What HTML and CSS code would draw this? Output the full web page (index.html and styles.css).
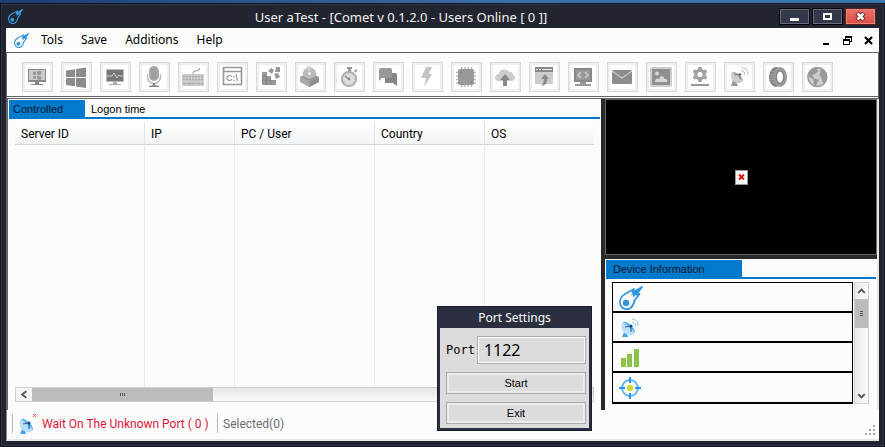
FILE: index.html
```html
<!DOCTYPE html>
<html lang="en">
<head>
<meta charset="utf-8">
<title>Comet v 0.1.2.0</title>
<link rel="stylesheet" href="styles.css">
</head>
<body>
<svg class="defs" aria-hidden="true">
  <symbol id="comet" viewBox="0 0 24 24">
    <path d="M2 20C-.5 15 2 10.500 6 8L15 3l-1.500 3.500L23 1l-5.500 7.500 3-.5-5 6.500c-.5 3-1.500 5.500-4 7.500-3 2-7.500 1.500-9.500-2z" fill="none" stroke="currentColor" stroke-width="1.800" stroke-linejoin="round"/>
    <path d="M23.500.500 14 6.500 11.500 9.500 14 8.500l0 3 3.500-3z" fill="currentColor"/>
    <circle cx="7" cy="17" r="3.200" fill="currentColor"/>
  </symbol>
  <symbol id="dish" viewBox="0 0 15 17">
    <path d="M3 12 1 17h6l-1-4z" fill="#42a5f5"/>
    <path d="M2 2C-1 7 1 13 7 15c3 .5 5 0 7-2z" fill="#bbdefb"/>
    <path d="M2 2l12 11c1-5-8-13-12-11z" fill="#64b5f6"/>
    <path d="M4 7l6-1v6" fill="none" stroke="#37658f" stroke-width="1.200"/>
    <circle cx="10" cy="6" r="1.500" fill="#0d47a1"/>
  </symbol>
</svg>
<main class="window">
  <header class="titlebar">
    <svg class="comet-small"><use href="#comet"/></svg>
    <h1>User aTest - [Comet v 0.1.2.0 - Users Online [ 0 ]]</h1>
    <div class="captions">
      <button class="cap" aria-label="Minimize"><svg viewBox="0 0 27 13"><path d="M9 8h9v3H9z" fill="#fff"/></svg></button>
      <button class="cap" aria-label="Maximize"><svg viewBox="0 0 27 13"><path d="M10 4h7v5h-7z" fill="none" stroke="#fff" stroke-width="2"/></svg></button>
      <button class="cap close" aria-label="Close"><svg viewBox="0 0 27 13"><path d="M10 3l7 7M17 3l-7 7" stroke="#7a2019" stroke-width="4.500"/><path d="M10.500 3.500l6 6M16.500 3.500l-6 6" stroke="#fff" stroke-width="2.500"/></svg></button>
    </div>
  </header>
  <div class="client">
    <nav class="menu">
      <svg class="comet-small"><use href="#comet"/></svg>
      <button>Tols</button><button>Save</button><button>Additions</button><button>Help</button>
      <div class="mdi">
        <button aria-label="Minimize child"><svg viewBox="0 0 9 9"><path d="M1 7h6v2H1z"/></svg></button>
        <button aria-label="Restore child"><svg viewBox="0 0 9 9"><path d="M2 0h7v6H7V5h1V2H3v1H2zM0 3h7v6H0zm1 2v3h5V5z" fill-rule="evenodd"/></svg></button>
        <button aria-label="Close child"><svg viewBox="0 0 9 9"><path d="M1 1l7 7M8 1L1 8" stroke="#000" stroke-width="2.200"/></svg></button>
      </div>
    </nav>
    <div class="toolbar">
      <button aria-label="Remote desktop"><svg viewBox="0 0 31 30"><path d="M6 7h18v13H6z" fill="#888"/><path d="M7 8h16v10H7z" fill="#ccc"/><path d="M11 10l3-.5V13h-3zm4-.6l4-.6V13h-4zM11 14h3v3l-3-.5zm4 0h4v4l-4-.7z" fill="#999"/><path d="M13 20h4v2h4v1H9v-1h4z" fill="#888"/></svg></button>
      <button aria-label="Windows"><svg viewBox="0 0 31 30"><path d="M5 8.500l9-1.300V15H5zm10-1.500l10-1.500V15H15zM5 16h9v8.300l-9-1.300zm10 0h10v10l-10-1.400z" fill="#8c8c8c"/></svg></button>
      <button aria-label="Monitoring"><svg viewBox="0 0 31 30"><path d="M6 7h18v13H6z" fill="#bbb"/><path d="M7 8h16v11H7z" fill="#777"/><path d="M7 14h5l2-3 3 5 2-3 1 1h3" fill="none" stroke="#ccc"/><path d="M13 20h4v2h4v1H9v-1h4z" fill="#aaa"/></svg></button>
      <button aria-label="Microphone"><svg viewBox="0 0 31 30"><path d="M8.500 12v3a6.500 6.500 0 0013 0v-3" fill="none" stroke="#bbb" stroke-width="1.500"/><rect x="10" y="4" width="10" height="15" rx="5" fill="#aaa"/><path d="M13 6v11M15 5v13M17 6v11" stroke="#8e8e8e" stroke-width=".7"/><path d="M14 21h2v2l4 1v1H10v-1l4-1z" fill="#888"/></svg></button>
      <button aria-label="Keyboard"><svg viewBox="0 0 31 30"><path d="M4 12h22v12H4z" fill="#ccc"/><path d="M5 14.500h20M5 17.500h20" stroke="#aaa" stroke-width="1.500" stroke-dasharray="2 1"/><path d="M5 21.500h20" stroke="#aaa" stroke-width="1.500" stroke-dasharray="3 1 9 1 3 1"/><path d="M15 12c0-4 2-3 4-3 2-.5 2-2 3-3" fill="none" stroke="#aaa" stroke-width="1.200"/></svg></button>
      <button aria-label="Command line"><svg viewBox="0 0 31 30"><path d="M6.500 5.500h18v17h-18zM7 9.500h18" fill="none" stroke="#999" stroke-width="1.700"/><text x="9" y="19">C:\</text></svg></button>
      <button aria-label="Registry"><svg viewBox="0 0 31 30"><path d="M6 10h5v4h4v4h5v5H6z" fill="#999"/><path d="M6 14h5M6 18h9M10.500 14v9M15 18v5" stroke="#7d7d7d"/><path d="M12 9l3-3 3 2-2 4zM20 5h4v5h-5zM18 12l4-1 2 4-4 2z" fill="#999"/></svg></button>
      <button aria-label="Programs"><svg viewBox="0 0 31 30"><path d="M5 15l9-4 10 4v5l-10 5-9-5z" fill="#aaa"/><path d="M14.500 19l9.500-4v5l-9.500 5z" fill="#909090"/><path d="M5 15l9.500-4 9.500 4-9.500 4z" fill="#989898"/><path d="M8 14a6.800 6.800 0 1113 0l-6.500 3z" fill="#bbb"/><path d="M14 10L11 5a7 7 0 015-1z" fill="#d4d4d4"/><circle cx="14.500" cy="11.500" r="1.300" fill="#fff"/></svg></button>
      <button aria-label="Timer"><svg viewBox="0 0 31 30"><path d="M13 5h5v2h-1v3h-3V7h-1zM20 9l2-2 1.500 1.500-2 2z" fill="#999"/><circle cx="15" cy="17" r="7.200" fill="#ddd" stroke="#aaa" stroke-width="1.700"/><path d="M11 14l4 3" stroke="#888" stroke-width="1.500"/><circle cx="15" cy="17" r="1.300" fill="#888"/><circle cx="15" cy="17" r="5.500" fill="none" stroke="#aaa" stroke-width=".8" stroke-dasharray="1 2"/></svg></button>
      <button aria-label="Chat"><svg viewBox="0 0 31 30"><path d="M12 11h10q2 0 2 2v11l-4-3h-8z" fill="#858585"/><path d="M8 6h9q2 0 2 2v6q0 2-2 2H9l-3 3V8q0-2 2-2z" fill="#999"/></svg></button>
      <button aria-label="Power"><svg viewBox="0 0 31 30"><path d="M14 5h6l-3 7h3l-8 13 2-9H9z" fill="#c4c4c4"/></svg></button>
      <button aria-label="Processor"><svg viewBox="0 0 31 30"><path d="M10.500 5v20M14 5v20M17 5v20M20.500 5v20M5 10.500h20M5 14h20M5 17.500h20M5 21h20" stroke="#bbb" stroke-width="1.500"/><rect x="7" y="7" width="16" height="16" rx="2" fill="#999"/><circle cx="10" cy="10" r="1" fill="#858585"/><circle cx="20" cy="20" r="1" fill="#858585"/></svg></button>
      <button aria-label="Upload"><svg viewBox="0 0 31 30"><path d="M8 19c-5-1-3-7 1-7 0-5 8-6 10-2 3-1 4 1 4 3 4 1 2 6-1 6z" fill="#ccc"/><path d="M15 12l5 6h-3v6h-4v-6h-3z" fill="#888"/></svg></button>
      <button aria-label="Open page"><svg viewBox="0 0 31 30"><path d="M6 5h18v17H6z" fill="#ccc"/><path d="M6 5h18v5H6z" fill="#888"/><path d="M7 7h2v1H7zm3 0h2v1h-2zm3 0h10v1H13z" fill="#eee"/><path d="M16 12l4 5h-2c0 4-1 6-6 7 2-2 3-4 3-7h-3z" fill="#888"/></svg></button>
      <button aria-label="Script"><svg viewBox="0 0 31 30"><path d="M6 6h18v14H6z" fill="#888"/><path d="M8 8h14v10H8z" fill="#999"/><path d="M13 10l-3 3 3 3M17 10l3 3-3 3" fill="none" stroke="#ccc" stroke-width="1.500"/><path d="M12 20h6v2h5v2H7v-2h5z" fill="#999"/></svg></button>
      <button aria-label="Mail"><svg viewBox="0 0 31 30"><rect x="5" y="8" width="20" height="14" rx="1.500" fill="#8c8c8c"/><path d="M5 9l10 7 10-7" fill="none" stroke="#ccc" stroke-width="1.200"/></svg></button>
      <button aria-label="Picture"><svg viewBox="0 0 31 30"><rect x="4" y="5" width="22" height="20" rx="2" fill="#ccc"/><path d="M6 7h18v16H6z" fill="#909090"/><path d="M9 20c0-4 3-4 4-3 2-4 5-4 5 0 3-1 4 3 3 3z" fill="#d8d8d8"/><circle cx="11" cy="11.500" r="2" fill="#d8d8d8"/></svg></button>
      <button aria-label="Settings"><svg viewBox="0 0 31 30"><circle cx="15" cy="12.500" r="4.200" fill="none" stroke="#a0a0a0" stroke-width="3.200"/><path d="M15 5v3M15 17v3M8.500 8.700l2.600 1.500M18.900 14.800l2.600 1.500M8.500 16.300l2.600-1.500M18.900 10.200l2.600-1.500" stroke="#a0a0a0" stroke-width="3.500"/><path d="M6 22h18v2H6z" fill="#999"/></svg></button>
      <button aria-label="Connection"><svg viewBox="0 0 31 30"><path d="M9 18l-2 6h7l-2-4z" fill="#999"/><path d="M8 10c-3 4 0 10 5 11 2 0 4 0 6-2z" fill="#ccc"/><path d="M8 10l11 9c1-3-8-11-11-9z" fill="#aaa"/><path d="M10 13l6-1v5" fill="none" stroke="#777"/><circle cx="16" cy="12.500" r="1.200" fill="#666"/><path d="M17 8q4 1 4 5M17 5.500q7 0 7 7" fill="none" stroke="#bbb"/></svg></button>
      <button aria-label="Tyre"><svg viewBox="0 0 31 30"><ellipse cx="13" cy="15" rx="7" ry="10" fill="#858585"/><ellipse cx="17" cy="15" rx="7" ry="10" fill="#999"/><ellipse cx="17" cy="15" rx="4.500" ry="7" fill="#858585"/><ellipse cx="17" cy="15" rx="3" ry="5.500" fill="#fff"/><path d="M8 9l3 1M7 12l3 1M6 15h4M7 18l3-1M8 21l3-1" stroke="#aaa" stroke-width=".8"/></svg></button>
      <button aria-label="World"><svg viewBox="0 0 31 30"><circle cx="15.300" cy="15" r="9.500" fill="#ccc" stroke="#999" stroke-width="1.500"/><path d="M7 10c2-3 5-5 9-5l-1 3 2 1-4 3-3 1 2 3-1 1-4-2zM11 16l6 2-2 3-1 4-2-1zM18 8l3-1 3 5 .5 4-2 5-2-1-1-4-2-3 1-3z" fill="#999"/></svg></button>
    </div>
    <div class="workspace">
      <section class="users">
        <div class="tabs"><button class="tab active">Controlled</button><button class="tab">Logon time</button></div>
        <div class="grid">
          <table>
            <colgroup><col class="c130"><col class="c90"><col class="c140"><col class="c110"><col></colgroup>
            <thead><tr><th>Server ID</th><th>IP</th><th>PC / User</th><th>Country</th><th>OS</th></tr></thead>
            <tbody><tr><td></td><td></td><td></td><td></td><td></td></tr></tbody>
          </table>
          <div class="hscroll">
            <button aria-label="Scroll left"><svg viewBox="0 0 17 13"><path d="M11 3L6.500 6.500 11 10" fill="none" stroke="#555" stroke-width="2"/></svg></button>
            <div class="hthumb"><i></i><i></i><i></i></div>
          </div>
        </div>
      </section>
      <aside class="side">
        <div class="preview"><div class="missing"><svg viewBox="0 0 7 6"><path d="M1 .5l5 5M6 .5l-5 5" stroke="#e00" stroke-width="1.800"/></svg></div></div>
        <section class="device">
          <div class="tabs"><button class="tab active info">Device Information</button></div>
          <div class="devbody">
            <ul class="devlist">
              <li><svg class="blue" viewBox="0 0 24 24"><use href="#comet"/></svg></li>
              <li><svg viewBox="0 0 24 24"><use href="#dish" x="2" y="4" width="15" height="17"/><path d="M13 6q4 1 4 5M13 3q6 0 6 7" fill="none" stroke="#90caf9"/></svg></li>
              <li><svg viewBox="0 0 24 24"><path d="M2 12h5v9H2zm6-4h5v13H8zm7-5h5v18h-5z" fill="#8bc34a"/></svg></li>
              <li><svg viewBox="0 0 24 24"><circle cx="11" cy="12" r="8" fill="none" stroke="#64b5f6" stroke-width="2"/><path d="M11 1v6M11 17v6M0 12h6M16 12h6" stroke="#2196f3" stroke-width="2"/><circle cx="11" cy="12" r="3.200" fill="#cddc39"/></svg></li>
            </ul>
            <div class="vscroll">
              <button aria-label="Scroll up"><svg viewBox="0 0 13 17"><path d="M3 10.500L6.500 7l3.500 3.500" fill="none" stroke="#555" stroke-width="2"/></svg></button>
              <div class="vthumb"><i></i><i></i><i></i></div>
              <button class="down" aria-label="Scroll down"><svg viewBox="0 0 13 17"><path d="M3 7.500L6.500 11 10 7.500" fill="none" stroke="#555" stroke-width="2"/></svg></button>
            </div>
          </div>
        </section>
      </aside>
    </div>
    <footer class="status">
      <div class="wait"><svg viewBox="0 0 22 22"><use href="#dish" x="1" y="4" width="15" height="17"/><path d="M15 1l3 3M18 1l-3 3" stroke="#f4511e"/></svg><span>Wait On The Unknown Port ( 0 )</span></div>
      <div class="selected">Selected(0)</div>
      <svg class="grip" viewBox="0 0 10 10"><path d="M8 0h2v2H8zM4 4h2v2H4zm4 0h2v2H8zM0 8h2v2H0zm4 0h2v2H4zm4 0h2v2H8z" fill="#aaa"/></svg>
    </footer>
  </div>
  <form class="dialog">
    <h2>Port Settings</h2>
    <div class="dialog-body">
      <div class="field"><label for="port">Port</label><input id="port" type="text" value="1122"></div>
      <button type="button">Start</button>
      <button type="button">Exit</button>
    </div>
  </form>
</main>
</body>
</html>
```
FILE: styles.css
```css
* { box-sizing: border-box; }
body {
  margin: 0;
  min-height: 100vh;
  display: flex;
  padding-top: 3px;
  background: linear-gradient(90deg, #1b3d70, #3a6fa3 55%, #3a78b0);
  font: 12px/16px "Noto Sans", "Open Sans", sans-serif;
  color: #000;
}
button { padding: 0; border: 0; background: none; font: inherit; color: inherit; }
svg { display: block; flex-shrink: 0; }
.defs { position: absolute; width: 0; height: 0; }

.window {
  position: relative;
  flex: 1;
  display: flex;
  flex-direction: column;
  padding: 0 5px 5px;
  background: #22242f;
  border: 1px solid #11131d;
  box-shadow: inset 0 0 0 1px #30364a;
}
.titlebar { display: flex; align-items: center; height: 24px; }
.comet-small { width: 15px; height: 15px; color: #3498db; }
.titlebar .comet-small { margin-left: 2px; }
h1 { flex: 1; margin: 0; padding-top: 2px; font-size: 13px; line-height: 18px; font-weight: 400; color: #f4f4f4; text-align: center; }
.captions { display: flex; gap: 2px; padding-right: 3px; }
.cap { width: 31px; height: 17px; padding: 1px; border: 1px solid #050508; background: #33384a; box-shadow: inset 0 0 0 1px #666b7b; }
.cap svg { width: 27px; height: 13px; }
.close { background: linear-gradient(#e9756b, #dc4b40); border-color: #5c1f1e; box-shadow: inset 0 0 0 1px #ec8279; }

.client { flex: 1; display: flex; flex-direction: column; min-width: 0; background: #fcfcfc; }
.menu { display: flex; align-items: center; height: 24px; padding: 0 6px 0 8px; gap: 18px; }
.menu .comet-small { margin-right: -6px; }
.mdi { display: flex; gap: 12px; margin-left: auto; }
.mdi svg { width: 9px; height: 9px; }

.toolbar { display: flex; gap: 8px; height: 47px; padding: 9px 16px 0 15px; border: 1px solid #666; border-bottom: 3px double #666; }
.toolbar button { width: 31px; height: 30px; background: #fff; box-shadow: inset 0 0 0 1px #d9d9d9, inset 0 0 0 3px #efefef; }
.toolbar svg { width: 31px; height: 30px; }
.toolbar text { font: bold 9px "Liberation Sans", sans-serif; fill: #999; }

.workspace { flex: 1; display: flex; border-left: 2px solid #666; border-right: 2px solid #e6e6e6; background: #28282a; }
.users { flex: 1; display: flex; flex-direction: column; min-width: 0; padding: 1px 1px 0; margin-right: 4px; background: #fcfcfc; }
.tabs { display: flex; height: 19px; border-bottom: 2px solid #007acc; }
.tab { font: 11px/19px "Liberation Sans", sans-serif; padding: 0 6px; text-align: left; }
.active { width: 76px; padding: 0 4px; background: #007acc; color: #06172c; }
.info { width: 136px; padding: 0 7px; }
.grid { flex: 1; display: flex; flex-direction: column; padding: 3px 6px 8px; }
table { width: 100%; flex: 1; height: 264px; border-collapse: separate; border-spacing: 0; table-layout: fixed; }
.c130 { width: 130px; }
.c90 { width: 90px; }
.c140 { width: 140px; }
.c110 { width: 110px; }
th { height: 23px; padding: 2px 6px 0; font: 12px/16px Roboto, sans-serif; text-align: left; background: linear-gradient(#fff, #f2f4f6); border-bottom: 1px solid #d5d5d5; border-right: 1px solid #e2e4e7; }
td { padding: 0; border-right: 1px solid #e3eefa; }
th:last-child, td:last-child { border-right: 0; }
.hscroll { display: flex; height: 15px; border: 1px solid #d0d0d0; background: linear-gradient(#e6e6e6, #fafafa); }
.hscroll button { width: 16px; background: #f5f5f5; }
.hscroll svg { width: 16px; height: 13px; }
.hthumb { display: flex; justify-content: center; align-items: center; gap: 1px; width: 181px; background: #bcbcbc; }
.hthumb i { width: 1px; height: 3px; background: #555; }

.side { width: 272px; display: flex; flex-direction: column; }
.preview { display: grid; place-items: center; height: 156px; background: #000; border: 1px solid #666; }
.missing { display: grid; place-items: center; width: 13px; height: 15px; background: #fff; border: 1px solid #999; }
.missing svg { width: 7px; height: 6px; }
.device { flex: 1; margin-top: 4px; padding: 1px 1px 0; background: #fcfcfc; }
.devbody { display: flex; gap: 1px; padding: 3px 7px 0 6px; }
.devlist { flex: 1; margin: 0; padding: 0; list-style: none; border: 1px solid #000; }
.devlist li { height: 30px; padding: 3px 6px; border-bottom: 2px solid #000; }
.devlist li:last-child { border-bottom-width: 1px; }
.devlist svg { width: 24px; height: 24px; }
.blue { color: #3498db; }
.vscroll { display: flex; flex-direction: column; width: 15px; border: 1px solid #d0d0d0; background: linear-gradient(90deg, #eaeaea, #fafafa); }
.vscroll svg { width: 13px; height: 16px; }
.vthumb { display: flex; flex-direction: column; justify-content: center; align-items: center; gap: 1px; height: 29px; background: #bcbcbc; }
.vthumb i { width: 3px; height: 1px; background: #555; }
.down { margin-top: auto; }

.status { display: flex; align-items: center; height: 31px; padding: 0 4px 2px 5px; border-left: 1px solid #888; border-bottom: 2px solid #e6e6e6; font-family: Roboto, sans-serif; white-space: nowrap; }
.wait, .selected { display: flex; align-items: center; height: 19px; padding-left: 5px; border-left: 1px solid #b8b8b8; }
.wait { width: 205px; gap: 2px; color: #dc143c; }
.wait svg { width: 22px; height: 22px; }
.selected { color: #6d6d6d; }
.grip { width: 10px; height: 10px; margin: 12px 0 0 auto; }

.dialog { position: absolute; right: 292px; bottom: 15px; width: 155px; padding: 0 2px 2px; background: #2b2e3e; border: 1px solid #1a1c28; }
h2 { margin: 0; font-size: 12px; line-height: 21px; font-weight: 400; text-align: center; color: #fff; }
.dialog-body { display: flex; flex-direction: column; gap: 8px; padding: 8px 3px 4px 6px; background: #dcdcdc; }
.field { display: flex; align-items: center; gap: 2px; }
label { font: 12px/16px "DejaVu Sans Mono", monospace; }
input { flex: 1; width: 0; height: 28px; padding: 0 6px; border: 1px solid #aaa; box-shadow: inset 0 0 0 1px #fff; background: #dcdcdc; font: 16px/24px "Noto Sans", sans-serif; color: #000; }
.dialog-body button { height: 22px; border: 1px solid #aaa; box-shadow: inset 0 0 0 2px #ececec; background: #dcdcdc; font: 11px/18px "Liberation Sans", sans-serif; }
```
